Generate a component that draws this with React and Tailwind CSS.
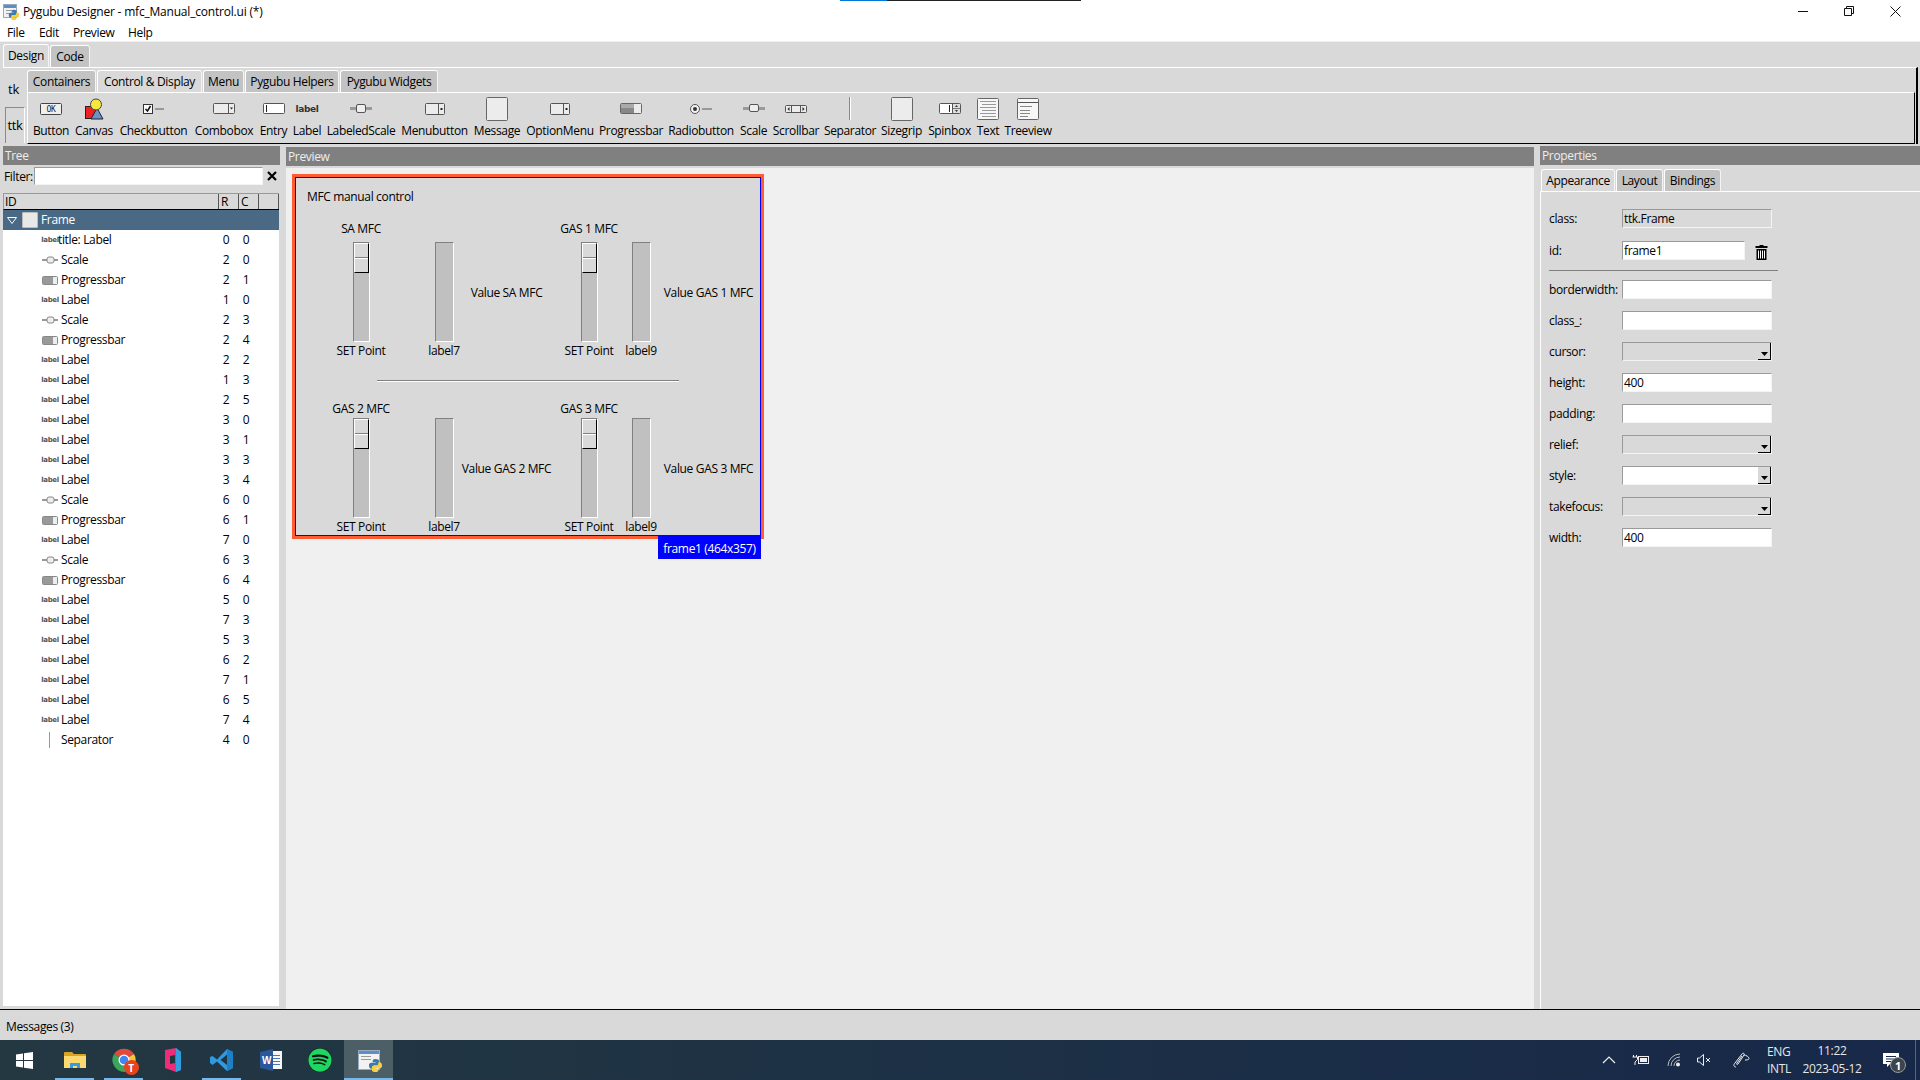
import React from "react";
import { FaSpotify } from "react-icons/fa";

const Py = ({ s = 14 }) => (
  <svg width={s} height={s} viewBox="0 0 16 16" className="absolute right-[-3px] bottom-[-3px]">
    <path d="M8 1C5.500 1 5 2 5 3v1.500h3.200V5H3.500C2 5 1 6 1 8s1 3.500 2.500 3.500H5V10c0-1.200 1-2 2-2h3c1 0 1.800-.8 1.800-1.800V3C11.800 2 10.500 1 8 1z" fill="#3a7ab3" />
    <path d="M8 15c2.500 0 3-1 3-2v-1.500H7.800V11h4.700C14 11 15 10 15 8s-1-3.500-2.500-3.500H11V6c0 1.200-1 2-2 2H6c-1 0-1.800.8-1.800 1.800V13c0 1 1.300 2 3.800 2z" fill="#f7cf46" />
  </svg>
);

const PyWindow = ({ w, h, ps }) => (
  <div className="relative" style={{ width: w, height: h }}>
    <div className="w-full h-full bg-[#f2f2f2] border border-[#9ab] flex flex-col gap-[2px]">
      <div className="h-[3px] bg-[#5b8fc7]" />
      <div className="h-[1px] w-1/2 bg-[#999] ml-[2px]" />
      <div className="h-[1px] w-1/2 bg-[#999] ml-[2px]" />
    </div>
    <Py s={ps} />
  </div>
);

const Tab = ({ active, w, children, h = "h-[22px]" }) => (
  <div className={`${w} ${h} shrink-0 flex items-center justify-center rounded-t-[3px] border-t border-l border-r border-t-white border-l-white border-r-[#f4f4f4] ${active ? "bg-[#d9d9d9]" : "bg-[#c3c3c3]"}`}>
    {children}
  </div>
);

const ToolIcons = {
  Button: (
    <svg width="22" height="12"><rect x=".5" y=".5" width="21" height="11" rx="1" fill="#efefef" stroke="#444" /><text x="11" y="9" textAnchor="middle" fontSize="8" fontFamily="DejaVu Sans Mono" fill="#222">OK</text></svg>
  ),
  Canvas: (
    <svg width="20" height="22"><rect x="1.500" y="8.500" width="11" height="12" fill="#ee2222" stroke="#222" /><path d="M13 10l6 11H7z" fill="#6c93c4" stroke="#223" /><circle cx="12" cy="6.500" r="5.500" fill="#f6e63d" stroke="#444" /></svg>
  ),
  Checkbutton: (
    <svg width="22" height="12"><rect x=".5" y="1.500" width="9" height="9" fill="#fafafa" stroke="#333" /><path d="M2.500 6l2 2 3-5" fill="none" stroke="#111" strokeWidth="1.500" /><rect x="12" y="5" width="9" height="2" fill="#999" /></svg>
  ),
  Combobox: (
    <svg width="22" height="12"><rect x=".5" y=".5" width="21" height="10" rx="1" fill="#ececec" stroke="#555" /><line x1="15.500" y1="1" x2="15.500" y2="10" stroke="#555" /><path d="M17 4.500h3l-1.500 2z" fill="#222" /></svg>
  ),
  Entry: (
    <svg width="22" height="12"><rect x=".5" y=".5" width="21" height="10" rx="1" fill="#fff" stroke="#555" /><line x1="3.500" y1="2" x2="3.500" y2="9" stroke="#222" /></svg>
  ),
  Label: <span className="font-['DejaVu_Sans',sans-serif] font-bold text-[9px] leading-[12px] text-[#333]">label</span>,
  LabeledScale: (
    <svg width="22" height="12"><rect x="0" y="4" width="22" height="3" fill="#999" /><rect x="6.500" y="1.500" width="9" height="8" rx="1.500" fill="#eee" stroke="#555" /></svg>
  ),
  Menubutton: (
    <svg width="20" height="12"><rect x=".5" y=".5" width="19" height="11" rx="1" fill="#ececec" stroke="#555" /><line x1="13.500" y1="1" x2="13.500" y2="11" stroke="#555" /><rect x="15.500" y="5" width="2" height="2" fill="#222" /></svg>
  ),
  Message: (
    <svg width="22" height="24"><rect x=".5" y=".5" width="21" height="23" rx="1" fill="#ececec" stroke="#666" /></svg>
  ),
  OptionMenu: (
    <svg width="20" height="12"><rect x=".5" y=".5" width="19" height="11" rx="1" fill="#ececec" stroke="#555" /><line x1="13.500" y1="1" x2="13.500" y2="11" stroke="#555" /><rect x="15.500" y="5" width="2" height="2" fill="#222" /></svg>
  ),
  Progressbar: (
    <svg width="22" height="12"><rect x=".5" y=".5" width="21" height="10" rx="1" fill="#ececec" stroke="#666" /><rect x="1" y="1" width="13" height="4" fill="#aaa" /><rect x="1" y="5" width="13" height="5" fill="#888" /></svg>
  ),
  Radiobutton: (
    <svg width="22" height="12"><circle cx="5" cy="6" r="4.500" fill="#f3f3f3" stroke="#555" /><circle cx="5" cy="6" r="2" fill="#333" /><rect x="12" y="5" width="10" height="2" fill="#999" /></svg>
  ),
  Scale: (
    <svg width="22" height="12"><rect x="0" y="4" width="22" height="3" fill="#999" /><rect x="6.500" y="1.500" width="9" height="7" rx="1.500" fill="#eee" stroke="#555" /></svg>
  ),
  Scrollbar: (
    <svg width="22" height="10"><rect x=".5" y="1.500" width="21" height="7" rx="1" fill="#ececec" stroke="#555" /><path d="M4.500 3v4l-2-2z" fill="#222" /><path d="M17.500 3v4l2-2z" fill="#222" /><line x1="6.500" y1="2" x2="6.500" y2="8" stroke="#555" /><line x1="15.500" y1="2" x2="15.500" y2="8" stroke="#555" /></svg>
  ),
  Separator: (
    <svg width="2" height="23"><rect width="1" height="23" fill="#888" /><rect x="1" width="1" height="23" fill="#fff" /></svg>
  ),
  Sizegrip: (
    <svg width="22" height="24"><rect x=".5" y=".5" width="21" height="23" rx="1" fill="#ececec" stroke="#666" /></svg>
  ),
  Spinbox: (
    <svg width="22" height="12"><rect x=".5" y=".5" width="21" height="10" rx="1" fill="#fff" stroke="#555" /><line x1="10.500" y1="2" x2="10.500" y2="9" stroke="#222" /><rect x="14" y="1" width="7" height="9" fill="#ddd" /><line x1="14" y1="5.500" x2="21" y2="5.500" stroke="#777" /><line x1="13.500" y1="1" x2="13.500" y2="10" stroke="#555" /><path d="M16 4h3l-1.500-2z" fill="#333" /><path d="M16 7h3l-1.500 2z" fill="#333" /></svg>
  ),
  Text: (
    <svg width="22" height="22"><rect x=".5" y=".5" width="21" height="21" rx="1" fill="#f7f7f7" stroke="#666" /><g stroke="#999">{[4, 7, 10, 13, 16, 19].map((y, i) => <line key={y} x1={i % 2 ? 5 : 3} x2="19" y1={y - .5} y2={y - .5} />)}</g></svg>
  ),
  Treeview: (
    <svg width="22" height="22"><rect x=".5" y=".5" width="21" height="21" rx="1" fill="#f7f7f7" stroke="#666" /><line x1="1" x2="21" y1="4.500" y2="4.500" stroke="#555" /><g stroke="#888"><line x1="3" x2="15" y1="8.500" y2="8.500" /><line x1="3" x2="13" y1="12.500" y2="12.500" /><line x1="3" x2="13" y1="15.500" y2="15.500" /><line x1="3" x2="11" y1="18.500" y2="18.500" /></g></svg>
  ),
};

const tools = [
  ["Button", "w-[36px]"], ["Canvas", "w-[38px]"], ["Checkbutton", "w-[69px]"], ["Combobox", "w-[60px]"],
  ["Entry", "w-[27px]"], ["Label", "w-[28px]"], ["LabeledScale", "w-[68px]"], ["Menubutton", "w-[67px]"],
  ["Message", "w-[46px]"], ["OptionMenu", "w-[68px]"], ["Progressbar", "w-[62px]"], ["Radiobutton", "w-[66px]"],
  ["Scale", "w-[27px]"], ["Scrollbar", "w-[46px]"], ["Separator", "w-[50px]"], ["Sizegrip", "w-[41px]"],
  ["Spinbox", "w-[43px]"], ["Text", "w-[22px]"], ["Treeview", "w-[46px]"],
];

const tree = [
  ["label", "title: Label", 0, 0], ["scale", "Scale", 2, 0], ["progress", "Progressbar", 2, 1], ["label", "Label", 1, 0],
  ["scale", "Scale", 2, 3], ["progress", "Progressbar", 2, 4], ["label", "Label", 2, 2], ["label", "Label", 1, 3],
  ["label", "Label", 2, 5], ["label", "Label", 3, 0], ["label", "Label", 3, 1], ["label", "Label", 3, 3],
  ["label", "Label", 3, 4], ["scale", "Scale", 6, 0], ["progress", "Progressbar", 6, 1], ["label", "Label", 7, 0],
  ["scale", "Scale", 6, 3], ["progress", "Progressbar", 6, 4], ["label", "Label", 5, 0], ["label", "Label", 7, 3],
  ["label", "Label", 5, 3], ["label", "Label", 6, 2], ["label", "Label", 7, 1], ["label", "Label", 6, 5],
  ["label", "Label", 7, 4], ["sep", "Separator", 4, 0],
];

const TreeIcon = ({ t }) => {
  if (t === "label") return <span className="font-['DejaVu_Sans',sans-serif] font-bold text-[7px] leading-none text-[#555]">label</span>;
  if (t === "scale") return <svg width="16" height="8"><rect y="3" width="16" height="2" fill="#999" /><rect x="5" y="1" width="7" height="6" rx="2" fill="#eee" stroke="#888" /></svg>;
  if (t === "progress") return <svg width="16" height="9"><rect x=".5" y=".5" width="15" height="8" rx="1" fill="#eee" stroke="#888" /><rect x="1" y="1" width="10" height="7" fill="#999" /></svg>;
  return <svg width="16" height="16"><rect x="7" width="1" height="16" fill="#999" /></svg>;
};

const Bar = ({ thumb, w }) => (
  <div className={`${w} h-[100px] bg-[#c0c0c0] border-t border-l border-t-[#808080] border-l-[#808080] border-r border-b border-r-white border-b-white`}>
    {thumb && (
      <div className="h-[30px] w-full bg-[#d9d9d9] border-t border-l border-t-white border-l-white border-r border-b border-r-black border-b-black flex items-center">
        <div className="w-full h-[2px] border-t border-b border-t-[#808080] border-b-white" />
      </div>
    )}
  </div>
);

const Block = ({ a, b, v, v2, headH, extra }) => (
  <div className={`grid grid-cols-[121px_32px_98px_62px_42px_93px] items-start ${extra}`}>
    <div className={`${headH} pr-[13px] text-center leading-5 whitespace-nowrap`}>{a}</div>
    <div className={headH} />
    <div className={headH} />
    <div className={`${headH} text-center leading-5 whitespace-nowrap`}>{b}</div>
    <div className={headH} />
    <div className={headH} />

    <div className="pr-[13px] flex justify-center"><Bar thumb w="w-[17px]" /></div>
    <div className="flex justify-center"><Bar w="w-[19px]" /></div>
    <div className="h-[100px] pr-[5px] pt-[1px] flex items-center justify-center whitespace-nowrap">{v}</div>
    <div className="flex justify-center"><Bar thumb w="w-[17px]" /></div>
    <div className="flex justify-center"><Bar w="w-[19px]" /></div>
    <div className="h-[100px] pt-[1px] flex items-center justify-center whitespace-nowrap">{v2}</div>

    <div className="h-[18px] pr-[13px] text-center leading-[18px] whitespace-nowrap">SET Point</div>
    <div className="h-[18px] text-center leading-[18px]">label7</div>
    <div className="h-[18px]" />
    <div className="h-[18px] text-center leading-[18px] whitespace-nowrap">SET Point</div>
    <div className="h-[18px] text-center leading-[18px]">label9</div>
    <div className="h-[18px]" />
  </div>
);

const sunken = "border-t border-l border-t-[#9a9a9a] border-l-[#9a9a9a] border-r border-b border-r-[#f4f4f4] border-b-[#f4f4f4]";

const Field = ({ label, value, kind = "entry", mb = "mb-[12px]" }) => (
  <div className={`flex items-center h-[19px] ${mb}`}>
    <div className="w-[73px] shrink-0 whitespace-nowrap">{label}</div>
    <div className={`w-[150px] h-[19px] ${sunken} flex items-center pl-[1px] leading-none ${kind === "dis" || kind === "readonly" ? "bg-[#d9d9d9]" : "bg-white"} relative`}>
      {value}
      {(kind === "dis" || kind === "combo") && (
        <div className="absolute right-0 top-0 w-[13px] h-[17px] bg-[#d9d9d9] border-r border-b border-r-black border-b-black flex items-end justify-center pb-[3px]">
          <svg width="7" height="4"><path d="M0 0h7L3.500 4z" fill="#000" /></svg>
        </div>
      )}
    </div>
  </div>
);

const Trash = () => (
  <svg width="13" height="16" viewBox="0 0 13 16" className="ml-[10px] mt-[2px]">
    <path d="M4.500 1h4v1h4v2H.5V2h4z" fill="#000" />
    <rect x="1.500" y="5" width="10" height="11" fill="#000" />
    <g stroke="#fff"><line x1="3.500" x2="3.500" y1="6.500" y2="14.500" /><line x1="5.500" x2="5.500" y1="6.500" y2="14.500" /><line x1="7.500" x2="7.500" y1="6.500" y2="14.500" /><line x1="9.500" x2="9.500" y1="6.500" y2="14.500" /></g>
  </svg>
);

const PanelHead = ({ children, cls }) => (
  <div className={`${cls} h-[19px] shrink-0 bg-[#808080] text-[#eeeeee] pl-[2px] leading-[19px]`}>{children}</div>
);

const TaskBtn = ({ children, line, active }) => (
  <div className={`relative w-[49px] h-10 shrink-0 flex items-center justify-center ${active ? "bg-[#4d5f66]" : ""}`}>
    {children}
    {line && <div className={`absolute bottom-0 h-[2px] bg-[#76b9ed] ${active ? "left-0 right-0" : "left-[5px] right-[5px]"}`} />}
  </div>
);

export default function App() {
  return (
    <div className="w-[1920px] h-[1080px] overflow-hidden flex flex-col bg-white text-[12px] text-black font-['Open_Sans',sans-serif] tracking-[-0.35px]">
      {/* Title bar */}
      <div className="relative h-[22px] shrink-0 flex items-center pl-[3px]">
        <div className="absolute top-0 left-[840px] w-[47px] h-[1px] bg-[#0078d7]" />
        <div className="absolute top-0 left-[887px] w-[194px] h-[1px] bg-[#222]" />
        <div className="relative w-[16px] h-[15px] mr-[4px]"><PyWindow w={14} h={14} ps={12} /></div>
        <span className="whitespace-nowrap pt-[2px] tracking-[-0.2px]">Pygubu Designer - mfc_Manual_control.ui (*)</span>
        <div className="ml-auto flex items-center">
          <div className="w-[46px] flex justify-center"><svg width="10" height="10"><rect y="5" width="10" height="1" fill="#111" /></svg></div>
          <div className="w-[46px] flex justify-center"><svg width="10" height="10"><path d="M2.500 2.500V.5h7v7h-2M.5 2.500h7v7h-7z" fill="none" stroke="#111" /></svg></div>
          <div className="w-[46px] mr-[2px] flex justify-center"><svg width="11" height="11"><path d="M.5.500l10 10M10.500.5l-10 10" stroke="#111" /></svg></div>
        </div>
      </div>
      {/* Menu */}
      <div className="h-[19px] shrink-0 flex items-center pl-[7px] pt-[2px] leading-none">
        <span className="w-[32px]">File</span><span className="w-[34px]">Edit</span><span className="w-[55px]">Preview</span><span>Help</span>
      </div>
      <div className="h-[1px] shrink-0 bg-[#f0f0f0]" />

      {/* Main */}
      <div className="flex-1 min-h-0 flex flex-col bg-[#d9d9d9]">
        <div className="h-[25px] shrink-0 flex items-end pl-[3px] gap-[1px] pt-[3px]">
          <Tab active w="w-[46px]" h="h-[23px]">Design</Tab>
          <Tab w="w-[40px]" h="h-[22px]">Code</Tab>
        </div>
        <div className="h-[77px] shrink-0 flex border-t border-white ml-[3px] mr-[2px] border-r-2 border-r-black">
          <div className="w-[24px] shrink-0 flex flex-col items-center">
            <div className="h-[39px] pr-[3px] flex items-end justify-center pb-[11px] leading-none text-[13px]">tk</div>
            <div className="w-[20px] h-[36px] border-t border-l border-t-[#8a8a8a] border-l-[#8a8a8a] border-r border-r-white flex items-center justify-center text-[13px]">ttk</div>
          </div>
          <div className="flex-1 flex flex-col pr-[1px]">
            <div className="h-[24px] shrink-0 flex items-end gap-[1px] pt-[2px]">
              <Tab w="w-[69px]">Containers</Tab>
              <Tab active w="w-[105px]">Control &amp; Display</Tab>
              <Tab w="w-[41px]">Menu</Tab>
              <Tab w="w-[94px]">Pygubu Helpers</Tab>
              <Tab w="w-[98px]">Pygubu Widgets</Tab>
            </div>
            <div className="h-[52px] shrink-0 flex gap-[6px] pl-[5px] border-t border-t-white border-l border-l-white border-r border-r-black border-b border-b-black">
              {tools.map(([name, w]) => (
                <div key={name} className={`${w} flex flex-col items-center shrink-0`}>
                  <div className="h-[30px] pt-[1px] flex items-center justify-center">{ToolIcons[name]}</div>
                  <div className="whitespace-nowrap leading-[16px]">{name}</div>
                </div>
              ))}
            </div>
          </div>
        </div>

        {/* Panes */}
        <div className="flex-1 min-h-0 flex pt-[2px] border-b border-b-black">
          {/* Tree */}
          <div className="w-[280px] shrink-0 ml-[3px] flex flex-col">
            <PanelHead cls="w-[277px]">Tree</PanelHead>
            <div className="h-[28px] shrink-0 flex items-start pt-[2px]">
              <div className="w-[31px] pl-[1px] leading-[20px]">Filter:</div>
              <div className={`w-[229px] h-[18px] bg-white ${sunken}`} />
              <svg width="10" height="10" className="ml-[4px] mt-[4px]"><path d="M1 1l8 8M9 1l-8 8" stroke="#000" strokeWidth="2.200" /></svg>
            </div>
            <div className="w-[276px] flex-1 min-h-0 bg-white mb-[3px] flex flex-col">
              <div className="h-[17px] shrink-0 bg-[#d9d9d9] flex border-b border-b-black border-t border-t-[#9a9a9a] border-l border-l-[#9a9a9a] leading-[15px]">
                <div className="w-[215px] pl-[1px] border-r border-r-[#555]">ID</div>
                <div className="w-[20px] pl-[2px] border-r border-r-[#555]">R</div>
                <div className="w-[20px] pl-[2px] border-r border-r-[#555]">C</div>
                <div className="flex-1 border-r border-r-[#555]" />
              </div>
              <div className="h-5 shrink-0 bg-[#4a6984] flex items-center text-white leading-none">
                <svg width="10" height="7" className="ml-[4px]"><path d="M.5.500h9L5 6.500z" fill="none" stroke="#fff" /></svg>
                <div className="w-[16px] h-[16px] ml-[5px] bg-[#e8e8e8] border border-[#bbb] rounded-[1px]" />
                <span className="ml-[3px]">Frame</span>
              </div>
              {tree.map(([ic, name, r, c], i) => (
                <div key={i} className="h-5 shrink-0 flex items-center leading-none">
                  <div className="w-[16px] ml-[39px] flex justify-center"><TreeIcon t={ic} /></div>
                  <div className={`w-[158px] ${i === 0 ? "" : "pl-[3px]"} whitespace-nowrap`}>{name}</div>
                  <div className="w-[20px] text-center">{r}</div>
                  <div className="w-[20px] text-center">{c}</div>
                </div>
              ))}
            </div>
          </div>

          <div className="w-[3px] shrink-0" />

          {/* Preview */}
          <div className="w-[1248px] shrink-0 flex flex-col">
            <PanelHead cls="w-full mt-[1px]">Preview</PanelHead>
            <div className="flex-1 mt-[2px] bg-[#f0f0f0] p-[6px]">
              <div className="relative w-[472px] h-[365px] border-[3px] border-[#ff5c33]">
                <div className="w-[466px] h-[359px] border border-[#0000ff] bg-[#d9d9d9] pl-[11px] pt-[9px]">
                  <div className="h-5 leading-5">MFC manual control</div>
                  <Block a="SA MFC" b="GAS 1 MFC" v="Value SA MFC" v2="Value GAS 1 MFC" headH="h-[23px]" extra="mt-[12px]" />
                  <div className="ml-[70px] w-[302px] h-[2px] mt-[20px] border-t border-b border-t-[#808080] border-b-white" />
                  <Block a="GAS 2 MFC" b="GAS 3 MFC" v="Value GAS 2 MFC" v2="Value GAS 3 MFC" headH="h-[19px]" extra="mt-[17px]" />
                </div>
                <div className="absolute top-[359px] right-0 w-[103px] h-[23px] bg-[#0000ff] text-white flex items-center justify-center pt-[3px] leading-none whitespace-nowrap">frame1 (464x357)</div>
              </div>
            </div>
          </div>

          <div className="w-[6px] shrink-0" />

          {/* Properties */}
          <div className="flex-1 min-w-0 flex flex-col">
            <PanelHead cls="w-full">Properties</PanelHead>
            <div className="h-[27px] shrink-0 flex items-end pl-[1px] gap-[1px] border-b border-b-white">
              <Tab active w="w-[74px]">Appearance</Tab>
              <Tab w="w-[47px]">Layout</Tab>
              <Tab w="w-[57px]">Bindings</Tab>
            </div>
            <div className="flex-1 border-l border-l-white pt-[17px] pl-[8px]">
              <Field label="class:" value="ttk.Frame" kind="readonly" mb="mb-[13px]" />
              <div className="flex items-center h-[19px] mb-[10px]">
                <div className="w-[73px] shrink-0">id:</div>
                <div className={`w-[123px] h-[19px] bg-white ${sunken} flex items-center pl-[1px] leading-none`}>frame1</div>
                <Trash />
              </div>
              <div className="w-[229px] h-[1px] bg-[#808080] mb-[9px]" />
              <Field label="borderwidth:" />
              <Field label="class_:" />
              <Field label="cursor:" kind="dis" />
              <Field label="height:" value="400" />
              <Field label="padding:" />
              <Field label="relief:" kind="dis" />
              <Field label="style:" kind="combo" />
              <Field label="takefocus:" kind="dis" />
              <Field label="width:" value="400" />
            </div>
          </div>
        </div>

        {/* Messages */}
        <div className="h-[30px] shrink-0 flex items-center pl-[6px] pt-[4px] bg-[#d9d9d9]">Messages (3)</div>
      </div>

      {/* Taskbar */}
      <div className="h-10 shrink-0 flex items-center bg-linear-to-r from-[#233841] to-[#172849] text-[#e6e6e6]">
        <div className="w-[50px] h-10 shrink-0 flex items-center justify-start pl-[16px]">
          <svg width="17" height="17" viewBox="0 0 17 17"><path d="M0 2.500l7-1v6.500H0zM8 1.300L17 0v8H8zM0 9h7v6.500l-7-1zM8 9h9v8l-9-1.300z" fill="#fff" /></svg>
        </div>
        <TaskBtn line>
          <svg width="22" height="18" viewBox="0 0 22 18"><path d="M0 2a1 1 0 011-1h7l2 2h11a1 1 0 011 1v13H0z" fill="#d9a420" /><rect y="5" width="22" height="12" fill="#fbd972" /><path d="M6 17v-5h10v5h-3v-2H9v2z" fill="#3a9ae0" /></svg>
        </TaskBtn>
        <TaskBtn line>
          <div className="relative w-[24px] h-[24px]">
            <svg width="24" height="24" viewBox="0 0 24 24">
              <path d="M12 12L2 6a12 12 0 0120 0z" fill="#df4a3c" />
              <path d="M12 12l10-6a12 12 0 01-8 17.800z" fill="#f5c73a" />
              <path d="M12 12l2 11.800A12 12 0 012 6z" fill="#3ba55c" />
              <circle cx="12" cy="12" r="5.500" fill="#fff" /><circle cx="12" cy="12" r="4.300" fill="#4285f4" />
            </svg>
            <div className="absolute right-[-3px] bottom-[-3px] w-[15px] h-[15px] rounded-full bg-[#e8431f] text-white text-[10px] font-bold flex items-center justify-center leading-none">T</div>
          </div>
        </TaskBtn>
        <TaskBtn>
          <svg width="16" height="24" viewBox="0 0 16 24"><path d="M0 2l11-2 5 4v18l-5 2-11-4z" fill="#ef2c78" /><path d="M11 0l5 4v18l-5 2z" fill="#2f9fe0" /><path d="M5 8l5-1v8l-5 1z" fill="#22353e" /></svg>
        </TaskBtn>
        <TaskBtn line>
          <svg width="24" height="24" viewBox="0 0 24 24"><path d="M17 1l6 3v16l-6 3-10-9.500-4.500 3.500L0 15v-6l2.500-1L7 11.500z" fill="#2f9ae0" /><path d="M17 1l6 3v16l-6 3z" fill="#1f7fc4" /><path d="M17 6.500L10.500 12l6.500 5z" fill="#22353e" /></svg>
        </TaskBtn>
        <TaskBtn>
          <svg width="22" height="22" viewBox="0 0 22 22"><rect x="8" y="2" width="14" height="18" fill="#f6f6f6" /><g stroke="#4a76b5"><line x1="13" x2="20" y1="6.500" y2="6.500" /><line x1="13" x2="20" y1="9.500" y2="9.500" /><line x1="13" x2="20" y1="12.500" y2="12.500" /><line x1="13" x2="20" y1="15.500" y2="15.500" /></g><path d="M0 3l13-3v22L0 19z" fill="#2b579a" /><text x="6.500" y="15" textAnchor="middle" fontSize="10" fontWeight="700" fill="#fff" fontFamily="Liberation Sans">W</text></svg>
        </TaskBtn>
        <TaskBtn>
          <div className="relative w-[24px] h-[24px] rounded-full bg-[#111]">
            <FaSpotify className="absolute inset-0 text-[#1ed760]" size={24} />
          </div>
        </TaskBtn>
        <TaskBtn line active>
          <PyWindow w={22} h={20} ps={15} />
        </TaskBtn>

        <div className="ml-auto flex items-center h-10">
          <div className="w-[30px] flex justify-center"><svg width="14" height="8"><path d="M1 7l6-6 6 6" fill="none" stroke="#eee" strokeWidth="1.200" /></svg></div>
          <div className="w-[34px] flex justify-center"><svg width="18" height="12"><path d="M1.500 1v2M4.500 1v2M.5 3h5v2.500L3 8v3" fill="none" stroke="#eee" /><rect x="6.500" y="2.500" width="10" height="7" fill="none" stroke="#eee" /><rect x="8" y="4" width="7" height="4" fill="#eee" /></svg></div>
          <div className="w-[31px] flex justify-center"><svg width="14" height="14"><path d="M1 13a12 12 0 0112-12M4 13a9 9 0 019-9M7 13a6 6 0 016-6" fill="none" stroke="#bbb" /><circle cx="11" cy="11.500" r="2" fill="#eee" /></svg></div>
          <div className="w-[31px] flex justify-center"><svg width="15" height="12"><path d="M.5 4h2l4-3.500v11l-4-3.500h-2z" fill="none" stroke="#eee" /><path d="M9 4l4 4M13 4l-4 4" stroke="#eee" /></svg></div>
          <div className="w-[42px] flex justify-center"><svg width="17" height="16"><path d="M3 15c-2 0-3-2-1-4l7-9c1-1.500 3-.5 2 1l-6 9c-1 1-2 0-1-1l5-7M11 3c2 0 5 2 5 3.500S13 8 12 8" fill="none" stroke="#eee" /></svg></div>
          <div className="w-[34px] pl-[5px] flex flex-col leading-[17px]"><span>ENG</span><span>INTL</span></div>
          <div className="w-[72px] flex flex-col items-center leading-[18px]"><span>11:22</span><span>2023-05-12</span></div>
          <div className="w-[47px] flex justify-center">
            <div className="relative w-[16px] h-[14px] mr-[1px]">
              <svg width="16" height="15" className="block"><path d="M0 0h16v11h-9l-3 3v-3H0z" fill="#fff" /><g stroke="#172849"><line x1="3" x2="13" y1="3.500" y2="3.500" /><line x1="3" x2="13" y1="6" y2="6" /><line x1="3" x2="10" y1="8.500" y2="8.500" /></g></svg>
              <div className="absolute left-[7px] top-[2px] w-[16px] h-[16px] mt-[2px] rounded-full bg-[#3c4450] border border-[#9a9a9a] text-white text-[11px] font-bold flex items-center justify-center leading-none">1</div>
            </div>
          </div>
          <div className="w-[5px] h-10 border-l border-l-[#5a6678]" />
        </div>
      </div>
    </div>
  );
}
